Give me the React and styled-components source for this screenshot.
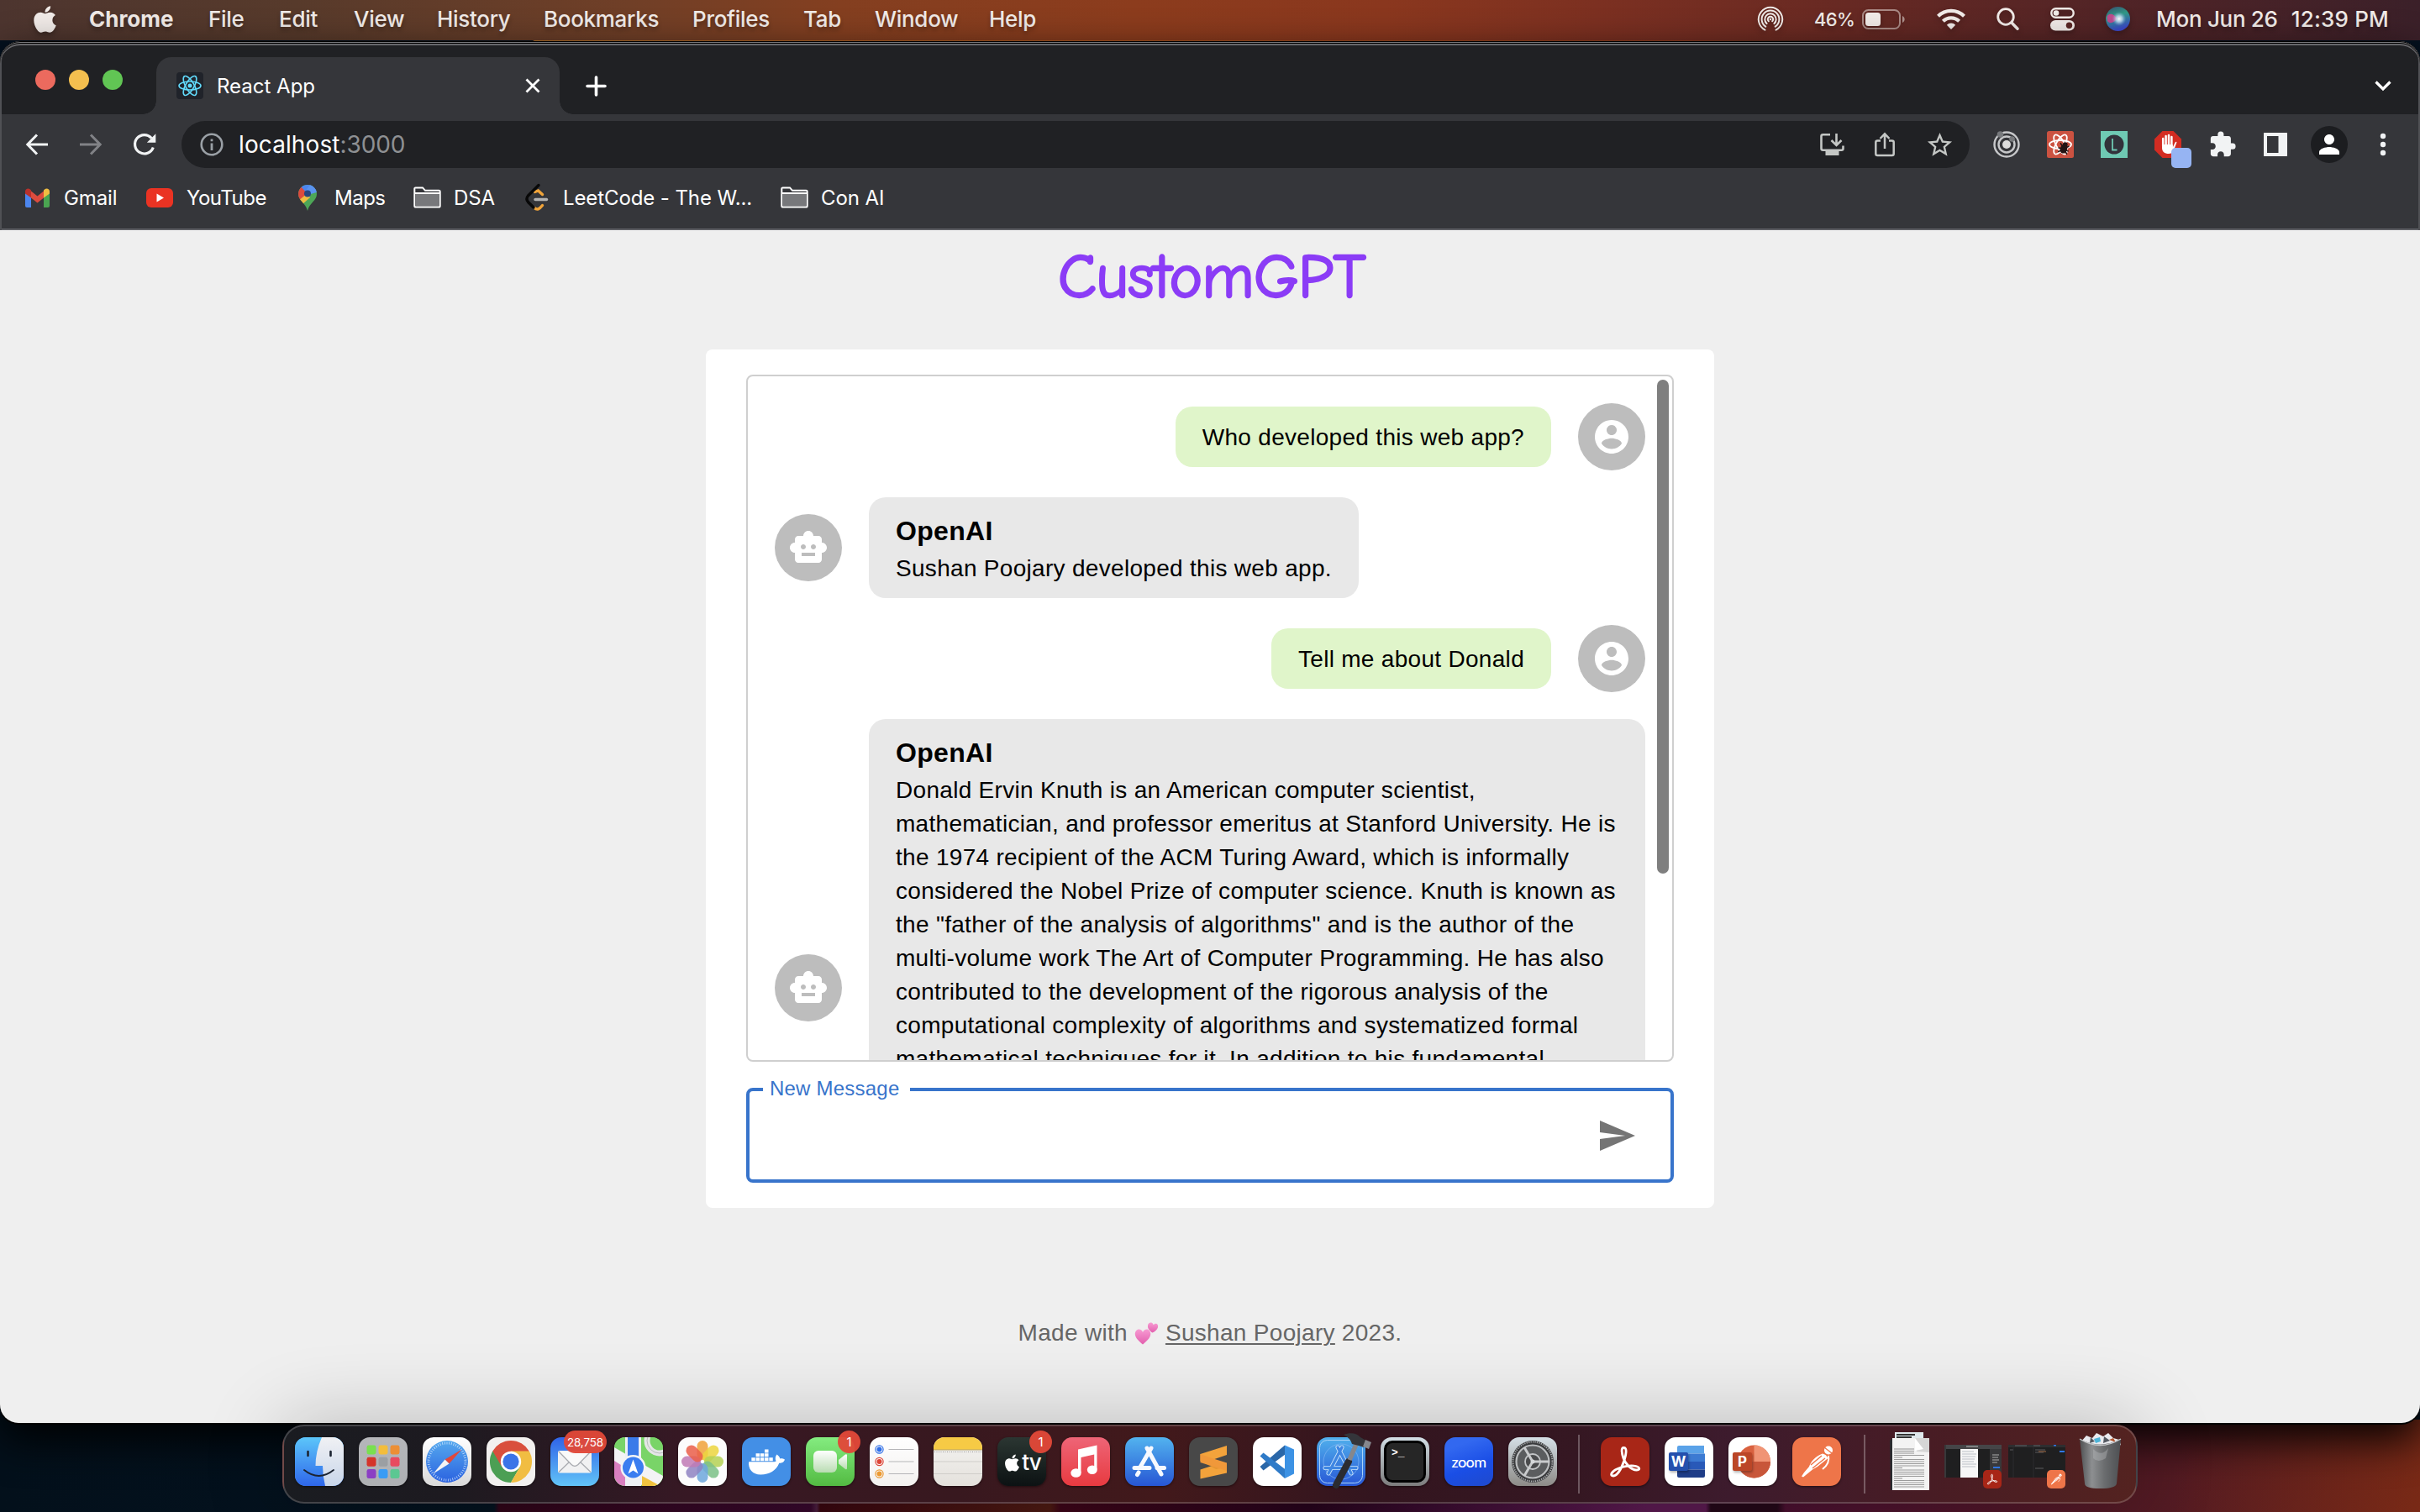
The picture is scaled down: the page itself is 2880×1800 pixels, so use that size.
import React from "react";
import styled, { createGlobalStyle } from "styled-components";
import { FaApple, FaDocker } from "react-icons/fa";
import { MdExtension, MdStarBorder, MdPerson } from "react-icons/md";

const ui = '"SF Pro Text", Inter, "Noto Sans", sans-serif';
const helvetica = '"Liberation Sans", Helvetica, Arial, sans-serif';

const GlobalStyle = createGlobalStyle`
  * { box-sizing: border-box; }
  html, body { margin: 0; padding: 0; }
  body { width: 2880px; height: 1800px; overflow: hidden; background: #000; }
  svg { display: block; flex: none; overflow: visible; }
`;

const Desktop = styled.div`
  width: 2880px;
  height: 1800px;
  display: flex;
  flex-direction: column;
  overflow: hidden;
  font-family: ${ui};
  background:
    linear-gradient(100deg, transparent 2560px, rgba(140, 48, 18, 0.75) 2930px) 0 1690px / 2880px 110px no-repeat,
    linear-gradient(90deg, #03101b 0, #04121f 588px, #2f0518 594px, #36082c 965px, #4b2040 972px, #38060f 976px, #4c1a12 1250px, #3c0518 1262px, #26041c 1560px, #5a1a50 1960px, #5a1a50 2030px, #230818 2036px, #230818 2115px, #4a1030 2125px, #521a24 2540px, #5c1f1c 2880px) 0 1690px / 2880px 110px no-repeat,
    linear-gradient(90deg, #04111f 0, #04111f 634px, #b0702a 636px, #a8551f 1300px, #8a3a1c 2000px, #04111f 2300px);
`;

/* ---------- system menu bar ---------- */
const MenuBar = styled.header`
  height: 48px;
  flex: none;
  display: flex;
  align-items: center;
  justify-content: space-between;
  padding: 0 37px 3px 40px;
  color: #f1ebe8;
  background: linear-gradient(90deg, #4d352f 0, #573a2b 350px, #703f27 750px, #843f20 1000px, #8c3c1d 1350px, #8a371e 1650px, #7c3021 1900px, #672923 2200px, #522426 2500px, #3b2029 2880px);
  text-shadow: 0 4px 5px rgba(0, 0, 0, 0.28);
`;
const MenuGroup = styled.nav`
  display: flex;
  align-items: center;
`;
const AppleMark = styled(FaApple)`
  width: 27px;
  height: 36px;
  margin-right: 39px;
  filter: drop-shadow(0 3px 3px rgba(0, 0, 0, 0.3));
`;
const MenuItem = styled.span`
  width: ${(p) => p.$w}px;
  font-size: 26px;
  font-weight: ${(p) => (p.$bold ? 700 : 500)};
  letter-spacing: ${(p) => (p.$bold ? 0 : -0.3)}px;
  white-space: nowrap;
`;
const Tray = styled.div`
  display: flex;
  align-items: center;
  svg { filter: drop-shadow(0 3px 3px rgba(0, 0, 0, 0.25)); }
`;
const Battery = styled.span`
  display: flex;
  align-items: center;
  gap: 9px;
  margin: 0 38px 0 36px;
  font-size: 22px;
  font-weight: 500;
  letter-spacing: -0.7px;
`;
const TrayIcons = styled.span`
  display: flex;
  align-items: center;
  gap: 37px;
`;
const Clock = styled.span`
  display: flex;
  gap: 16px;
  margin-left: 31px;
  font-size: 26px;
  font-weight: 500;
  letter-spacing: -0.3px;
  white-space: nowrap;
`;
const Time = styled.span`
  letter-spacing: 0.2px;
`;

/* ---------- browser window ---------- */
const BrowserWindow = styled.main`
  position: relative;
  height: 1645px;
  margin-top: 1px;
  flex: none;
  display: flex;
  flex-direction: column;
  border-radius: 24px 24px 22px 22px;
  overflow: hidden;
  background: #35363a;
  box-shadow: 0 2px 0 #000, 0 20px 50px rgba(0, 0, 0, 0.95);
  &::after {
    content: "";
    position: absolute;
    inset: 0 0 auto 0;
    height: 225px;
    border-radius: 24px 24px 0 0;
    pointer-events: none;
    box-shadow: inset 0 1px #000, inset 0 2px #77777a, inset 0 3px #000, inset 0 5px #67676b, inset 2px 0 #505155, inset -2px 0 #505155;
  }
`;
const TabStrip = styled.div`
  height: 87px;
  flex: none;
  display: flex;
  align-items: flex-end;
  padding: 0 34px 0 42px;
  background: #202124;
`;
const Lights = styled.div`
  display: flex;
  gap: 16px;
  margin: 0 40px 29px 0;
`;
const Light = styled.i`
  width: 24px;
  height: 24px;
  border-radius: 50%;
  background: ${(p) => p.$color};
`;
const Tab = styled.div`
  position: relative;
  width: 480px;
  height: 68px;
  display: flex;
  align-items: center;
  padding: 0 23px 0 24px;
  border-radius: 18px 18px 0 0;
  background: #35363a;
  color: #fff;
  font-size: 24px;
  &::before, &::after {
    content: "";
    position: absolute;
    bottom: 0;
    width: 16px;
    height: 16px;
  }
  &::before {
    left: -16px;
    background: radial-gradient(circle at 0 0, transparent 15.5px, #35363a 16px);
  }
  &::after {
    right: -16px;
    background: radial-gradient(circle at 100% 0, transparent 15.5px, #35363a 16px);
  }
`;
const TabIcon = styled.span`
  width: 32px;
  height: 32px;
  display: grid;
  place-items: center;
  margin-right: 16px;
  border-radius: 4px;
  background: #20232a;
`;
const TabTitle = styled.span`
  flex: 1;
`;
const StripButton = styled.span`
  height: 68px;
  display: grid;
  place-items: center;
  margin-left: ${(p) => (p.$end ? "auto" : "31px")};
`;
const Toolbar = styled.div`
  height: 72px;
  flex: none;
  display: flex;
  align-items: center;
  padding: 0 36px 0 30px;
`;
const NavButtons = styled.div`
  display: flex;
  gap: 36px;
  width: 186px;
`;
const Omnibox = styled.div`
  width: 2128px;
  height: 56px;
  display: flex;
  align-items: center;
  padding: 0 18px 0 22px;
  border-radius: 28px;
  background: #202124;
  color: #fff;
  font-size: 28px;
`;
const Address = styled.span`
  flex: 1;
  margin-left: 18px;
  letter-spacing: 0.1px;
`;
const Port = styled.span`
  color: #8e9093;
  letter-spacing: -0.1px;
`;
const OmniIcons = styled.span`
  display: flex;
  align-items: center;
  gap: 36px;
  color: #c4c7c5;
`;
const Extensions = styled.div`
  display: flex;
  align-items: center;
  margin-left: 28px;
  color: #f1f3f4;
`;
const ExtSlot = styled.span`
  position: relative;
  width: ${(p) => p.$w || 64}px;
  height: 32px;
  display: flex;
  align-items: center;
`;
const BlueBadge = styled.i`
  position: absolute;
  left: 20px;
  top: 20px;
  width: 24px;
  height: 24px;
  border-radius: 5px;
  background: #96b4f3;
`;
const ProfileButton = styled.span`
  width: 44px;
  height: 44px;
  margin-right: 38px;
  display: grid;
  place-items: center;
  border-radius: 50%;
  background: #1c1d20;
  color: #fff;
`;
const Bookmarks = styled.div`
  height: 66px;
  flex: none;
  display: flex;
  align-items: center;
  padding: 0 0 10px 29px;
  border-bottom: 2px solid #5f6065;
  color: #fff;
  font-size: 24px;
  letter-spacing: -0.1px;
`;
const Bookmark = styled.span`
  width: ${(p) => p.$w}px;
  display: flex;
  align-items: center;
  white-space: nowrap;
  letter-spacing: ${(p) => (p.$tight ? -0.5 : -0.1)}px;
`;
const BookmarkIcon = styled.span`
  width: ${(p) => p.$w || 48}px;
`;

/* ---------- page ---------- */
const Page = styled.div`
  flex: 1;
  display: flex;
  flex-direction: column;
  align-items: center;
  background: #efefef;
  font-family: ${helvetica};
`;
const Title = styled.h1`
  height: 142px;
  margin: 0;
  padding: 10px 0 0 4px;
  font: 400 75px/92px "Comic Sans MS", "Comic Neue", Lato, cursive;
  font-variant-ligatures: none;
  letter-spacing: -0.6px;
  color: #8b3cf6;
  -webkit-text-stroke: 2.4px #8b3cf6;
`;
const Card = styled.section`
  width: 1200px;
  height: 1022px;
  display: flex;
  flex-direction: column;
  gap: 31px;
  padding: 30px 48px;
  border-radius: 8px;
  background: #fff;
`;
const ChatBox = styled.div`
  position: relative;
  height: 818px;
  flex: none;
  overflow: hidden;
  display: flex;
  flex-direction: column;
  gap: 32px;
  padding: 32px;
  border: 2px solid #cfcfcf;
  border-radius: 8px;
`;
const ScrollThumb = styled.i`
  position: absolute;
  top: 4px;
  right: 4px;
  width: 14px;
  height: 588px;
  border-radius: 7px;
  background: #7f7f7f;
`;
const Message = styled.div`
  flex: none;
  display: flex;
  align-items: center;
  justify-content: ${(p) => (p.$own ? "flex-end" : "flex-start")};
  gap: 32px;
`;
const Avatar = styled.span`
  width: 80px;
  height: 80px;
  flex: none;
  display: grid;
  place-items: center;
  border-radius: 50%;
  background: #bdbdbd;
  color: #fff;
`;
const Bubble = styled.div`
  flex: ${(p) => (p.$minHeight ? "1" : "none")};
  min-height: ${(p) => p.$minHeight || 0}px;
  padding: ${(p) => (p.$own ? 17 : 16)}px 32px 15px;
  border-radius: 20px;
  background: ${(p) => (p.$own ? "#e0f5ca" : "#e8e8e8")};
  color: #000;
`;
const Sender = styled.div`
  height: 49px;
  font: 700 32px/48px ${helvetica};
  letter-spacing: 0.3px;
`;
const Line = styled.div`
  font-size: 28px;
  line-height: 40px;
  letter-spacing: 0.3px;
  white-space: nowrap;
`;
const InputBox = styled.div`
  position: relative;
  height: 113px;
  flex: none;
  display: flex;
  align-items: center;
  justify-content: flex-end;
  padding: 0 40px 0 0;
  border: 4px solid #3874cb;
  border-radius: 8px;
`;
const InputLabel = styled.label`
  position: absolute;
  left: 16px;
  top: -17px;
  width: 175px;
  padding-left: 8px;
  background: #fff;
  color: #3874cb;
  font-size: 24px;
  line-height: 28px;
  letter-spacing: 0.22px;
  white-space: nowrap;
`;
const Footer = styled.footer`
  margin-top: 129px;
  display: flex;
  align-items: center;
  color: #666;
  font-size: 28px;
  line-height: 40px;
  letter-spacing: 0.3px;
  white-space: pre;
`;
const AuthorLink = styled.a`
  text-decoration: underline;
  text-decoration-thickness: 2px;
  text-underline-offset: 3px;
  margin: 0 8px 0 9px;
`;

/* ---------- dock ---------- */
const DockRow = styled.div`
  position: relative;
  display: flex;
  justify-content: center;
  margin-top: 2px;
`;
const Dock = styled.div`
  width: 2208px;
  height: 94px;
  display: flex;
  align-items: flex-start;
  padding: 13px 0 0 13px;
  border: 2px solid rgba(255, 255, 255, 0.18);
  border-radius: 26px;
  background: linear-gradient(90deg, #1a1c21 0, #1d1a20 200px, #371824 480px, #38181f 800px, #42191b 1040px, #33151f 1300px, #351722 1540px, #3d1b2d 1720px, #481c24 1960px, #542320 2208px);
  box-shadow: 0 0 96px rgba(0, 0, 0, 0.24);
`;
const DockItem = styled.div`
  position: relative;
  width: 76px;
  flex: none;
`;
const Tile = styled.div`
  width: 58px;
  height: 58px;
  display: grid;
  place-items: center;
  overflow: ${(p) => (p.$spill ? "visible" : "hidden")};
  border-radius: 13px;
  background: ${(p) => p.$bg};
  box-shadow: 0 1px 3px rgba(0, 0, 0, 0.5);
  color: #fff;
`;
const CountBadge = styled.span`
  position: absolute;
  top: -8px;
  right: ${(p) => (p.$wide ? 9 : 11)}px;
  min-width: 27px;
  height: 27px;
  display: grid;
  place-items: center;
  padding: 0 4px;
  border-radius: 14px;
  background: rgba(225, 72, 56, 0.96);
  color: #fff;
  font-size: ${(p) => (p.$wide ? 13.4 : 15)}px;
  letter-spacing: -0.1px;
`;
const Divider = styled.i`
  width: 2px;
  height: 70px;
  flex: none;
  margin: -3px ${(p) => p.$after}px 0 ${(p) => p.$before}px;
  background: rgba(255, 255, 255, 0.28);
`;
const DocStack = styled.div`
  margin: -6px 18px 0 0;
`;
const MiniWindow = styled.div`
  position: relative;
  width: 68px;
  height: 39px;
  margin: 9px 8px 0 0;
  background: #1f1f20;
`;
const MiniBadge = styled.div`
  position: absolute;
  right: 0;
  top: 30px;
  width: 22px;
  height: 22px;
  display: grid;
  place-items: center;
  border-radius: 5px;
  background: ${(p) => p.$bg};
`;
const Trash = styled.div`
  margin: -6px 0 0 8px;
`;
const WordMark = styled.span`
  font: ${(p) => p.$font};
  letter-spacing: ${(p) => p.$ls || 0}px;
`;
const TvMark = styled.span`
  display: flex;
  align-items: center;
  margin-top: 2px;
  font: 500 26px/24px ${ui};
  letter-spacing: -1px;
`;
const OfficeLetter = styled.span`
  position: absolute;
  left: 5px;
  top: 18px;
  width: 23px;
  height: 22px;
  display: grid;
  place-items: center;
  border-radius: 2px;
  background: ${(p) => p.$bg};
  box-shadow: 1px 2px 3px rgba(0, 0, 0, 0.3);
  color: #fff;
  font: 700 17px/20px ${ui};
`;
const Prompt = styled.span`
  width: 50px;
  height: 50px;
  padding: 5px 0 0 6px;
  border: 3px solid #000;
  border-radius: 10px;
  background: #262626;
  font: 700 13px/14px "Liberation Mono", monospace;
`;

/* ---------- line icons ---------- */
const Airdrop = () => (
  <svg width="32" height="31" viewBox="0 0 32 31" fill="none" stroke="currentColor" strokeWidth="2" strokeLinecap="round">
    <path d="M9.500 28.600A14.200 14.200 0 1 1 22.500 28.600" />
    <path d="M10.300 24.700A10.400 10.400 0 1 1 21.700 24.700" />
    <path d="M11.600 21.100A6.700 6.700 0 1 1 20.400 21.100" />
    <path d="M13.800 18.300A3.200 3.200 0 1 1 18.200 18.300" />
    <circle cx="16" cy="16" r="1.300" fill="currentColor" stroke="none" />
  </svg>
);
const BatteryGlyph = () => (
  <svg width="51" height="24" viewBox="0 0 51 24">
    <rect x="1" y="1" width="44" height="22" rx="6.5" fill="none" stroke="currentColor" strokeOpacity=".5" strokeWidth="2" />
    <rect x="4" y="4" width="18" height="16" rx="3.5" fill="currentColor" />
    <path d="M48 8c3.500 1.500 3.500 6.500 0 8z" fill="currentColor" opacity=".55" />
  </svg>
);
const Wifi = () => (
  <svg width="34" height="25" viewBox="0 0 34 25" fill="none" stroke="currentColor" strokeWidth="4.200">
    <path d="M1.500 9.200a22 22 0 0 1 31 0" />
    <path d="M7.400 15.300a13.600 13.600 0 0 1 19.200 0" />
    <path d="M17 25l-5.200-5.300a7.400 7.400 0 0 1 10.400 0z" fill="currentColor" stroke="none" />
  </svg>
);
const Search = () => (
  <svg width="27" height="27" viewBox="0 0 27 27" fill="none" stroke="currentColor" strokeWidth="2.800" strokeLinecap="round">
    <circle cx="11" cy="11" r="9.300" />
    <path d="M18 18l7 7.200" strokeWidth="3.400" />
  </svg>
);
const Toggles = () => (
  <svg width="29" height="27" viewBox="0 0 29 27">
    <rect x="1.300" y="1.300" width="26.400" height="10.400" rx="5.200" fill="none" stroke="currentColor" strokeWidth="2.400" />
    <circle cx="7" cy="6.500" r="3.300" fill="currentColor" />
    <rect x="0" y="15" width="29" height="12.500" rx="6.250" fill="currentColor" />
    <circle cx="22.500" cy="21.200" r="3.700" fill="#5a2725" />
  </svg>
);
const Siri = () => (
  <svg width="29" height="29" viewBox="0 0 29 29">
    <defs>
      <linearGradient id="siriBase" x1="0" y1="0" x2=".3" y2="1">
        <stop offset="0" stopColor="#3a4a6e" /><stop offset=".45" stopColor="#2f9a86" /><stop offset="1" stopColor="#3b49c8" />
      </linearGradient>
      <radialGradient id="siriGlow" cx=".55" cy=".5" r=".3">
        <stop offset="0" stopColor="#fff" /><stop offset=".45" stopColor="#d7ecff" stopOpacity=".7" /><stop offset="1" stopColor="#8ad" stopOpacity="0" />
      </radialGradient>
    </defs>
    <circle cx="14.500" cy="14.500" r="14.500" fill="url(#siriBase)" />
    <path d="M1.500 12c2-5 8-4 12 2-3 5-9 7-11.500 3z" fill="#d8418e" opacity=".85" />
    <circle cx="14.500" cy="14.500" r="14" fill="url(#siriGlow)" />
  </svg>
);
const ReactMark = ({ size = 28, color = "#61dafb", w = 1.6 }) => (
  <svg width={size} height={size} viewBox="-14 -14 28 28" fill="none" stroke={color} strokeWidth={w}>
    <circle r="2.500" fill={color} stroke="none" />
    <ellipse rx="13" ry="5" />
    <ellipse rx="13" ry="5" transform="rotate(60)" />
    <ellipse rx="13" ry="5" transform="rotate(120)" />
  </svg>
);
const Cross = () => (
  <svg width="18" height="18" viewBox="0 0 18 18" stroke="#fff" strokeWidth="2.800"><path d="M1.500 1.500l15 15M16.500 1.500l-15 15" /></svg>
);
const Plus = () => (
  <svg width="25" height="25" viewBox="0 0 25 25" stroke="#fff" strokeWidth="3.600" strokeLinecap="round"><path d="M12.500 2v21M2 12.500h21" /></svg>
);
const Chevron = () => (
  <svg width="20" height="12" viewBox="0 0 20 12" fill="none" stroke="#fff" strokeWidth="3.200"><path d="M1.500 1.500l8.500 8.500 8.500-8.500" /></svg>
);
const Arrow = ({ flip, color }) => (
  <svg width="28" height="28" viewBox="0 0 28 28" fill="none" stroke={color} strokeWidth="3" strokeLinejoin="miter">
    <g transform={flip ? "translate(28 0) scale(-1 1)" : undefined}><path d="M14 2.500L2.800 14 14 25.500M3.500 14H27" /></g>
  </svg>
);
const Reload = () => (
  <svg width="28" height="28" viewBox="0 0 28 28">
    <path d="M24.300 17.500A11.200 11.200 0 1 1 22.300 6.500" fill="none" stroke="#f1f3f4" strokeWidth="3.200" />
    <path d="M27.300 1.200v10.500H16.800z" fill="#f1f3f4" />
  </svg>
);
const Info = () => (
  <svg width="28" height="28" viewBox="0 0 28 28">
    <circle cx="14" cy="14" r="12.300" fill="none" stroke="#9aa0a6" strokeWidth="2.600" />
    <path d="M12.600 12.600h2.800V21h-2.800zM12.600 7.500h2.800v2.800h-2.800z" fill="#9aa0a6" />
  </svg>
);
const Install = () => (
  <svg width="29" height="28" viewBox="0 0 29 28" fill="none" stroke="currentColor" strokeWidth="2.600">
    <path d="M12 2.300H3.500a2 2 0 0 0-2 2v14.500a2 2 0 0 0 2 2H25.500a2 2 0 0 0 2-2V15.500" />
    <path d="M19.500 1v13M13.500 9l6 6 6-6" />
    <path d="M6.500 22h16v5h-16z" fill="currentColor" stroke="none" />
  </svg>
);
const Share = () => (
  <svg width="24" height="30" viewBox="0 0 24 30" fill="none" stroke="currentColor" strokeWidth="2.500">
    <path d="M7 10.500H3.300a2 2 0 0 0-2 2V26a2 2 0 0 0 2 2h17.400a2 2 0 0 0 2-2V12.500a2 2 0 0 0-2-2H17" />
    <path d="M12 20V2.500M6.500 8L12 2.300 17.500 8" />
  </svg>
);
const Target = () => (
  <svg width="32" height="32" viewBox="0 0 32 32" fill="none" stroke="#c7c8ca" strokeWidth="2.400">
    <circle cx="16" cy="16" r="14.500" /><circle cx="16" cy="16" r="9.500" />
    <circle cx="16" cy="16" r="5" fill="#dcdcdc" stroke="none" />
    <circle cx="8.500" cy="4" r="3.800" fill="#77797c" stroke="none" /><circle cx="22.500" cy="9.500" r="3.300" fill="#77797c" stroke="none" />
  </svg>
);
const ReactDev = () => (
  <svg width="32" height="32" viewBox="0 0 32 32">
    <rect width="32" height="32" rx="2.500" fill="#cb5241" />
    <g transform="translate(16 16)" fill="none" stroke="#fff" strokeWidth="1.800"><ellipse rx="13" ry="5" /><ellipse rx="13" ry="5" transform="rotate(60)" /><ellipse rx="13" ry="5" transform="rotate(120)" /></g>
    <g transform="translate(20 21) rotate(20)" fill="#231413" stroke="#231413" strokeWidth="1.500"><ellipse rx="3.300" ry="5" /><circle cy="-5" r="2.200" /><path d="M-6-5L6 5M-6.500 1H6.500M-5 6L5-5" /></g>
  </svg>
);
const LExt = () => (
  <svg width="32" height="32" viewBox="0 0 32 32">
    <rect width="32" height="32" fill="#6fc9b3" /><circle cx="16" cy="16" r="11.500" fill="#32323a" />
    <path d="M14 9v13.500h5.500" fill="none" stroke="#6fc9b3" strokeWidth="1.800" />
  </svg>
);
const StopHand = () => (
  <svg width="32" height="32" viewBox="0 0 32 32">
    <path d="M9.500 0h13L32 9.500v13L22.500 32h-13L0 22.500v-13z" fill="#d32c22" />
    <path d="M10.200 9v9M13.600 6v11M17 5v12M20.400 7v11" stroke="#fff" strokeWidth="2.500" strokeLinecap="round" />
    <path d="M9 16h12.600l.4 3 2.600-5.500c1-1.300 2.200-.6 1.700.6L22.500 24c-1 2-3 3-5.500 3-5 0-8-2.500-8-7z" fill="#fff" />
  </svg>
);
const SidePanel = () => (
  <svg width="28" height="28" viewBox="0 0 28 28"><path d="M0 0h28v28H0zM4 4v20h13.500V4z" fill="#f1f3f4" fillRule="evenodd" /></svg>
);
const Dots = () => (
  <svg width="8" height="28" viewBox="0 0 8 28" fill="#f1f3f4"><circle cx="4" cy="4" r="3.200" /><circle cx="4" cy="14" r="3.200" /><circle cx="4" cy="24" r="3.200" /></svg>
);
const Gmail = () => (
  <svg width="31" height="23" viewBox="0 0 31 23">
    <path d="M1 4v17a2 2 0 0 0 2 2h5V9z" fill="#4c86ee" /><path d="M30 4v17a2 2 0 0 1-2 2h-5V9z" fill="#4aa551" />
    <path d="M8 3.500l7.500 6 7.500-6v8L15.500 17.500 8 11.500z" fill="#dc4b3e" />
    <path d="M1 4C1 .8 4.500-.6 7 1.500l1 1v9L1 6.500z" fill="#b9312b" /><path d="M30 4c0-3.200-3.500-4.600-6-2.500l-1 1v9l7-5z" fill="#f0bd42" />
  </svg>
);
const YouTube = () => (
  <svg width="32" height="23" viewBox="0 0 32 23"><rect width="32" height="23" rx="6" fill="#ea3323" /><path d="M12.500 6.500v10l8.500-5z" fill="#fff" /></svg>
);
const MapsPin = () => (
  <svg width="22" height="31" viewBox="0 0 22 31">
    <clipPath id="pinShape"><path d="M11 0a11 11 0 0 0-11 11c0 8 8.500 10 11 20 2.500-10 11-12 11-20A11 11 0 0 0 11 0z" /></clipPath>
    <g clipPath="url(#pinShape)">
      <rect width="22" height="31" fill="#4da657" /><path d="M0 0h22v7L11 11 2 4z" fill="#4c86ee" /><path d="M0 0l3 2 8 9-11 9z" fill="#dc4b3e" />
      <path d="M0 19l11-9 3 5-10 9z" fill="#f0bd42" /><path d="M14 0h8v9l-11 3-3-4z" fill="#5a93ef" />
    </g>
    <circle cx="11" cy="10.500" r="4" fill="#28467f" />
  </svg>
);
const Folder = () => (
  <svg width="33" height="26" viewBox="0 0 33 26">
    <path d="M1.300 23V2.600c0-.7.500-1.200 1.200-1.200H11l3 3.400h16.300c.8 0 1.400.6 1.400 1.300V23c0 .9-.6 1.600-1.500 1.600H2.800c-.9 0-1.500-.7-1.500-1.600z" fill="#35363a" stroke="#fff" strokeWidth="2" />
    <path d="M2.500 9h28v14h-28z" fill="#77787b" /><path d="M1.500 8h30" stroke="#fff" strokeWidth="2" />
  </svg>
);
const LeetCode = () => (
  <svg width="28" height="32" viewBox="0 0 28 32" fill="none" strokeLinecap="round" strokeWidth="3.400">
    <path d="M11.500 9.500l4-1.500 5 4.500M11 28.500c3 3 6 1.500 9.500-3" stroke="#f0a43a" />
    <path d="M16 1.500L3.500 14c-2 2.300-2 5 0 7.500L10 28" stroke="#080808" />
    <path d="M12 18.500h13.500" stroke="#b3b3b3" />
  </svg>
);
const BotIcon = () => (
  <svg width="48" height="48" viewBox="0 0 24 24" fill="currentColor"><path d="M20 9V7c0-1.100-.9-2-2-2h-3c0-1.660-1.340-3-3-3S9 3.340 9 5H6c-1.100 0-2 .9-2 2v2c-1.660 0-3 1.340-3 3s1.340 3 3 3v4c0 1.100.9 2 2 2h12c1.100 0 2-.9 2-2v-4c1.660 0 3-1.340 3-3s-1.340-3-3-3zM7.500 11.500c0-.83.67-1.500 1.500-1.500s1.500.67 1.500 1.500S9.830 13 9 13s-1.500-.67-1.500-1.500zM16 17H8v-2h8v2zm-1-4c-.83 0-1.500-.67-1.500-1.500S14.170 10 15 10s1.500.67 1.500 1.500S15.830 13 15 13z" /></svg>
);
const UserIcon = () => (
  <svg width="48" height="48" viewBox="0 0 24 24" fill="currentColor"><path d="M12 2C6.480 2 2 6.480 2 12s4.480 10 10 10 10-4.480 10-10S17.520 2 12 2zm0 3c1.660 0 3 1.340 3 3s-1.340 3-3 3-3-1.340-3-3 1.340-3 3-3zm0 14.200c-2.500 0-4.710-1.280-6-3.220.03-1.990 4-3.080 6-3.080 1.990 0 5.970 1.090 6 3.080-1.290 1.940-3.500 3.220-6 3.220z" /></svg>
);
const SendIcon = () => (
  <svg width="48" height="48" viewBox="0 0 24 24" fill="#757575"><path d="M2.010 21L23 12 2.010 3 2 10l15 2-15 2z" /></svg>
);
const Hearts = () => (
  <svg width="28" height="27" viewBox="0 0 28 27">
    <defs><linearGradient id="pink" x1="0" y1="0" x2="0" y2="1"><stop offset="0" stopColor="#f79ad2" /><stop offset="1" stopColor="#e25fae" /></linearGradient></defs>
    <path d="M10 26.500C6 23 .8 19 .8 14c0-3 2-5.500 4.600-5.500 2.200 0 3.900 1.500 4.600 3.500.9-2 2.700-3.500 4.700-3.500 2.700 0 4.600 2.500 4.600 5.500 0 5-5.300 9-9.300 12.500z" fill="url(#pink)" />
    <path d="M22 12.500c-3-1.700-6.400-4.500-6.200-8C15.900 2 17.600.5 19.500.7c1.500.1 2.500 1.200 2.900 2.500C23.200 2 24.400 1.200 25.700 1.500c1.800.4 2.600 2.200 2.200 4.200-.6 3-3.300 5.200-5.900 6.800z" fill="url(#pink)" transform="rotate(4 21 7)" />
  </svg>
);

/* ---------- dock artwork ---------- */
const Finder = () => (
  <svg width="58" height="58" viewBox="0 0 58 58">
    <defs>
      <linearGradient id="fbl" x1="0" y1="0" x2="0" y2="1"><stop offset="0" stopColor="#5cc6fa" /><stop offset="1" stopColor="#2e66ea" /></linearGradient>
      <linearGradient id="fwh" x1="0" y1="0" x2="0" y2="1"><stop offset="0" stopColor="#f0f1f4" /><stop offset="1" stopColor="#c9d6ea" /></linearGradient>
    </defs>
    <rect width="58" height="58" fill="url(#fbl)" />
    <path d="M32 0Q24.500 17 24.500 34H33Q33 46 36 58H58V0z" fill="url(#fwh)" />
    <path d="M15.500 17v5M42.500 17v5" stroke="#1c2431" strokeWidth="2.600" strokeLinecap="round" />
    <path d="M11 39q17.500 14 35 0" fill="none" stroke="#1c2431" strokeWidth="1.900" strokeLinecap="round" />
  </svg>
);
const padColors = ["#79e04f", "#f3bd3c", "#ec8f35", "#d5342a", "#9b9fa3", "#e84a60", "#8b3fc4", "#3a9cf5", "#5cc792"];
const Launchpad = () => (
  <svg width="58" height="58" viewBox="0 0 58 58">
    {padColors.map((c, i) => <rect key={c} x={9.500 + (i % 3) * 14} y={9.500 + Math.floor(i / 3) * 14.300} width="11" height="11" rx="2.400" fill={c} />)}
  </svg>
);
const Safari = () => (
  <svg width="58" height="58" viewBox="0 0 58 58">
    <defs><linearGradient id="saf" x1="0" y1="0" x2="0" y2="1"><stop offset="0" stopColor="#55a9ee" /><stop offset="1" stopColor="#2b62e0" /></linearGradient></defs>
    <circle cx="29" cy="29" r="25" fill="url(#saf)" />
    <circle cx="29" cy="29" r="22" fill="none" stroke="#d9ecff" strokeWidth="3" strokeDasharray=".8 1.900" opacity=".85" />
    <path d="M46.500 14.500L31.500 31.500 26.500 26.500z" fill="#e0483c" /><path d="M12.500 43.500L26.500 26.500 31.500 31.500z" fill="#f4f4f4" />
  </svg>
);
const Chrome = () => (
  <svg width="58" height="58" viewBox="0 0 58 58">
    <path d="M29 29L7.300 16.500A25 25 0 0 1 50.700 16.500z" fill="#d94f3d" /><path d="M7.300 16.500a25 25 0 0 0 21.700 37.500L40 35 29 29z" fill="#4c9f54" />
    <path d="M50.700 16.500H29V29l10.800 6.200L29 54a25 25 0 0 0 21.700-37.500z" fill="#f1bd42" />
    <path d="M50.700 16.500H29l-10.800 18.700L7.300 16.500z" fill="#d94f3d" />
    <circle cx="29" cy="29" r="12.200" fill="#fff" /><circle cx="29" cy="29" r="9.600" fill="#3b74e8" />
  </svg>
);
const Mail = () => (
  <svg width="58" height="58" viewBox="0 0 58 58">
    <rect x="9" y="16" width="40" height="26.500" rx="2" fill="#f1f1f2" /><path d="M10 41.500L24 28M48 41.500L34 28" stroke="#a9abb0" strokeWidth="1.300" />
    <path d="M10 17l15 15.500c2.500 2.400 5.500 2.400 8 0L48 17" fill="#fafafa" stroke="#a9abb0" strokeWidth="1.300" />
  </svg>
);
const Maps = () => (
  <svg width="58" height="58" viewBox="0 0 58 58">
    <rect width="58" height="58" fill="#79d468" /><path d="M0 12l58 34v12H34L0 30z" fill="#f3f3f5" /><path d="M0 28l16 10v20H0z" fill="#d97fc0" />
    <path d="M33 46l22 12H33z" fill="#f0c23f" /><circle cx="54" cy="4" r="15" fill="none" stroke="#e4e6e6" strokeWidth="7" /><circle cx="54" cy="4" r="15" fill="none" stroke="#b9bdbd" strokeWidth="1" />
    <path d="M13 0h19v58H13z" fill="#eef0f4" /><path d="M16 0h13v30H16z" fill="#3b7be9" />
    <circle cx="22.500" cy="36" r="15" fill="#f2f3f5" /><circle cx="22.500" cy="36" r="12.500" fill="#3a7df0" /><path d="M22.500 26.500l6 17-6-4-6 4z" fill="#fff" />
  </svg>
);
const petals = ["#f0a23b", "#ecd53f", "#b5d255", "#7cc087", "#6fa8dc", "#8f83c2", "#c07ab5", "#ea5f4b"];
const Photos = () => (
  <svg width="58" height="58" viewBox="0 0 58 58">
    {petals.map((c, i) => <rect key={c} x="22.500" y="4" width="13" height="23" rx="6.500" fill={c} opacity=".86" transform={`rotate(${i * 45} 29 29)`} />)}
  </svg>
);
const FaceTime = () => (
  <svg width="58" height="58" viewBox="0 0 58 58">
    <defs><linearGradient id="cam" x1="0" y1="0" x2="0" y2="1"><stop offset="0" stopColor="#fff" /><stop offset="1" stopColor="#b9dcb2" /></linearGradient></defs>
    <rect x="9" y="16" width="28" height="26" rx="6" fill="url(#cam)" /><path d="M39 27l8-6.500q2-1 2 1V37q0 2-2 1l-8-6.500z" fill="url(#cam)" />
  </svg>
);
const Reminders = () => (
  <svg width="58" height="58" viewBox="0 0 58 58">
    {["#2f6fe8", "#dd4437", "#ec9a32"].map((c, i) => (
      <g key={c} transform={`translate(11.500 ${14.500 + i * 14.500})`}><circle r="4.600" fill="none" stroke={c} strokeWidth="1.200" /><circle r="3" fill={c} /><path d="M11 0H41" stroke="#b5b5b8" strokeWidth="1.200" /></g>
    ))}
  </svg>
);
const Notes = () => (
  <svg width="58" height="58" viewBox="0 0 58 58">
    <rect width="58" height="15" fill="#f6ca45" /><path d="M0 15h58" stroke="#b8a468" strokeWidth="1" /><path d="M1 17.500h56" stroke="#999" strokeWidth="1" strokeDasharray="1 1.500" />
    <path d="M0 29h58M0 43.500h58" stroke="#cfcdc9" strokeWidth="1" />
  </svg>
);
const Music = () => (
  <svg width="58" height="58" viewBox="0 0 58 58" fill="#fff">
    <path d="M20 14.500L42.500 9.500V38h-3.300V20.500L23.500 24v18h-3.500z" />
    <ellipse cx="17.500" cy="42.500" rx="6.200" ry="5.300" /><ellipse cx="36.800" cy="38.800" rx="6" ry="5.200" />
  </svg>
);
const AppStore = () => (
  <svg width="58" height="58" viewBox="0 0 58 58" stroke="#f6f9ff" strokeWidth="5" strokeLinecap="round">
    <path d="M31 13L18 35.500M16 42l-1.500 2.500M26 13l17 31" /><path d="M11 36.500h18M38 36.500h8.500" />
  </svg>
);
const Sublime = () => (
  <svg width="58" height="58" viewBox="0 0 58 58">
    <path d="M13.500 20L45 10v11L26 27.500 45 31.500v11L13.500 49.500V38.500L32 32.500 13.500 28z" fill="#f3a33b" />
    <path d="M13.500 28l31.500 3.500v4L32 38z" fill="#d98a2c" opacity=".55" />
    <path d="M13.500 20v10L45 40V30.500L26 24.500z" fill="#f0983a" />
  </svg>
);
const VSCode = () => (
  <svg width="58" height="58" viewBox="0 0 58 58">
    <path d="M38 9.500L8.500 35l4 4.500L39 20z" fill="#2a67a8" /><path d="M38 49L8.500 22.500l4-4L39 38.500z" fill="#2f7bc8" /><path d="M38 9.500l11 5v29l-11 5.500z" fill="#3c92e4" />
  </svg>
);
const Xcode = () => (
  <svg width="58" height="58" viewBox="0 0 58 58" fill="none">
    <rect x="3.500" y="3.500" width="51" height="51" rx="9" stroke="#a8d3f8" strokeWidth="1" /><circle cx="29" cy="29" r="21" stroke="#7fb5f2" strokeWidth=".7" />
    <g stroke="#cfe6fb" strokeLinecap="round" strokeWidth="5"><path d="M30 12L14 43M25 12l16 31M10 36.500h37" /></g>
    <g stroke="#3f86e2" strokeLinecap="round" strokeWidth="3.400"><path d="M30 12L14 43M25 12l16 31M10 36.500h37" /></g>
    <path d="M38 29L23 57" stroke="#2b2c31" strokeWidth="8" strokeLinecap="round" /><path d="M48 6L39 27" stroke="#85878d" strokeWidth="5.500" />
    <path d="M32-3c8-3 16-2 20 3l7 4-3 8-6-2-8-2q-2-7-10-11z" fill="#34353a" /><path d="M58 3l7 3-3 8-7-3z" fill="#85878d" />
  </svg>
);
const Gear = () => (
  <svg width="58" height="58" viewBox="0 0 58 58" fill="none">
    <circle cx="29" cy="29" r="25" fill="#3a3b3d" /><circle cx="29" cy="29" r="23.500" stroke="#a9abad" strokeWidth="2" strokeDasharray="1.300 1.200" />
    <circle cx="29" cy="29" r="19.500" fill="#5b5d5f" stroke="#bcbec0" strokeWidth="2.200" /><circle cx="29" cy="29" r="9" fill="#4a4b4d" stroke="#c3c5c7" strokeWidth="1.800" />
    <path d="M29 29H49M29 29L19 12M29 29L19 46" stroke="#c9cbcd" strokeWidth="3" /><circle cx="29" cy="29" r="2.500" fill="#d5d7d9" />
  </svg>
);
const Acrobat = ({ size = 58 }) => (
  <svg width={size} height={size} viewBox="0 0 58 58" fill="none" stroke="#fff" strokeWidth="2.800" strokeLinejoin="round">
    <path d="M27 12.500c5-1 3 9 1 15-3 9-8 18-13 18.500-4.500 0-2.500-5 4-8 7-3.500 17-5 23-3.500 5 1.400 5 4.500.5 4.500-6 0-13-7-15.500-14-2-6-3-12 0-12.500z" />
  </svg>
);
const Word = () => (
  <svg width="58" height="58" viewBox="0 0 58 58"><path d="M17 10h30v9.500H15V12q0-2 2-2z" fill="#5aa2e8" /><path d="M15 19.500h33V29H15z" fill="#3c7ad2" /><path d="M15 29h33v9.500H15z" fill="#2959b8" /><path d="M15 38.500h33V46q0 2-2 2H17q-2 0-2-2z" fill="#1f3d88" /></svg>
);
const PowerPoint = () => (
  <svg width="58" height="58" viewBox="0 0 58 58"><circle cx="30.500" cy="29" r="19.500" fill="#d9613f" /><path d="M30.500 9.500A19.500 19.500 0 0 1 50 29H30.500z" fill="#f09475" /><path d="M11 29h39a19.500 19.500 0 0 1-39 0z" fill="#c8563a" /></svg>
);
const Postman = ({ size = 58 }) => (
  <svg width={size} height={size} viewBox="0 0 58 58" fill="#fff">
    <circle cx="43" cy="15.500" r="5" /><path d="M36 19.500c3 .5 5 2.500 6.500 5.500L30 35l-6 3.500-11 9-2-1 3-4.500 6-7c2-6 8-13 16-15.500z" />
    <path d="M22 33l13-11M24 37l15-12" stroke="#ee7549" strokeWidth="1.500" /><path d="M43 22q2 9-7 16" fill="none" stroke="#fff" strokeWidth="2" /><path d="M38 12l9 7" stroke="#ee7549" strokeWidth="1.300" />
  </svg>
);
const lineRows = Array.from({ length: 19 }, (_, i) => 20 + i * 2.500);
const Documents = () => (
  <svg width="47" height="69" viewBox="0 0 47 69">
    <rect x="6" y="0" width="34" height="12" fill="#dfe8ec" /><path d="M8 3h22M8 6h18" stroke="#333" strokeWidth="2" /><path d="M8 8h14v4H8z" fill="#5a7f45" /><path d="M22 7h17v5H22z" fill="#86b4d6" />
    <path d="M0 10l3-3v62H1z" fill="#2a2c30" /><path d="M3 7h31l13 13v49H3z" fill="#f3f3f3" />
    {lineRows.map((y, i) => <path key={y} d={`M5 ${y}H${i % 5 === 4 ? 15 : y < 26 ? 29 : 41}`} stroke="#9b9b9b" strokeWidth="1.100" />)}
    <path d="M30 7h17v17l-15-1z" fill="#d6d6d6" /><path d="M30 7v15l10-2z" fill="#fff" />
  </svg>
);
const EditorShot = () => (
  <svg width="68" height="39" viewBox="0 0 68 39">
    <path d="M0 0h68v5H0z" fill="#454547" /><path d="M0 0h2v39H0zM54 5h14v34H54z" fill="#38383a" /><path d="M19 5h21v34H19z" fill="#f7f7f7" />
    <path d="M26 2h14" stroke="#ddd" strokeWidth=".8" />
    {[8, 11, 14, 17, 20, 23, 26].map((y) => <path key={y} d={`M21 ${y}h${14 + (y % 4)}`} stroke={y % 3 ? "#b3b8bf" : "#73a8e0"} strokeWidth=".9" />)}
    <path d="M57 12h8M57 15h7M57 18h8M57 21h6" stroke="#bbb" strokeWidth=".9" /><path d="M58 26h8v2h-8z" fill="#2f74e0" />
  </svg>
);
const ApiShot = () => (
  <svg width="68" height="39" viewBox="0 0 68 39">
    <path d="M0 0h68v3H0z" fill="#2e2e30" /><path d="M8 1h14M30 1h8M2 6h4M32 6h12M32 9h10M32 28h10" stroke="#77777c" strokeWidth=".7" /><path d="M30 3v36M6 3v36" stroke="#323236" strokeWidth=".7" />
    <path d="M61 7h6v2h-6zM54 0h3v1.500h-3z" fill="#3177e8" /><path d="M36 8h9" stroke="#c47d4e" strokeWidth=".8" />
  </svg>
);
const TrashCan = () => (
  <svg width="51" height="67" viewBox="0 0 51 67">
    <defs><linearGradient id="can" x1="0" y1="0" x2="1" y2="0"><stop offset="0" stopColor="#4e5052" /><stop offset=".3" stopColor="#8d8f91" /><stop offset=".6" stopColor="#6b6d6f" /><stop offset="1" stopColor="#4d4f52" /></linearGradient></defs>
    <path d="M2 12L9 4l7 3 5-6 8 4 6-4 6 6 7 2 2 6-8 4H12z" fill="#e9eaee" /><path d="M14 6l5 5-6 2zM30 5l7 5-8 3z" fill="#555a62" /><path d="M18 8l7-2 1 5-6 2z" fill="#4db4d8" /><path d="M36 9l5-2 3 5z" fill="#b5562e" />
    <path d="M1 8q24 13 49 0L45 61q-1 6-19.500 6T7 61z" fill="url(#can)" /><path d="M1 8q24 15 49 0" fill="none" stroke="#c4c6c8" strokeWidth="1.400" />
    <path d="M17 20q10 10 18-1l-3 12q-9 6-15 0z" fill="#b9bbbd" opacity=".4" />
  </svg>
);

const menus = [["Chrome", 142, true], ["File", 84], ["Edit", 89], ["View", 99], ["History", 127], ["Bookmarks", 177], ["Profiles", 132], ["Tab", 85], ["Window", 136], ["Help", 60]];

const reply = [
  "Donald Ervin Knuth is an American computer scientist,",
  "mathematician, and professor emeritus at Stanford University. He is",
  "the 1974 recipient of the ACM Turing Award, which is informally",
  "considered the Nobel Prize of computer science. Knuth is known as",
  "the \"father of the analysis of algorithms\" and is the author of the",
  "multi-volume work The Art of Computer Programming. He has also",
  "contributed to the development of the rigorous analysis of the",
  "computational complexity of algorithms and systematized formal",
  "mathematical techniques for it. In addition to his fundamental",
];

const dockApps = [
  { bg: "#4a9af0", art: <Finder /> },
  { bg: "linear-gradient(#b5b6ba, #aeb0b3)", art: <Launchpad /> },
  { bg: "linear-gradient(#fff, #d9d9d9)", art: <Safari /> },
  { bg: "#f2f0ef", art: <Chrome /> },
  { bg: "linear-gradient(#2f63e8, #62c4f8)", art: <Mail />, badge: "28,758" },
  { bg: "#79d468", art: <Maps /> },
  { bg: "#fcfcfc", art: <Photos /> },
  { bg: "#438fe6", art: <FaDocker size={43} /> },
  { bg: "linear-gradient(#84ec80, #53bb42)", art: <FaceTime />, badge: "1" },
  { bg: "linear-gradient(#fff, #f3f1ef)", art: <Reminders /> },
  { bg: "linear-gradient(#f4f3f1, #e4e1dc)", art: <Notes /> },
  { bg: "linear-gradient(#2b3632, #0c1213)", art: <TvMark><FaApple size={23} />tv</TvMark>, badge: "1" },
  { bg: "linear-gradient(#ee6577, #e83a40)", art: <Music /> },
  { bg: "linear-gradient(#52b3ef, #2756d4)", art: <AppStore /> },
  { bg: "#484848", art: <Sublime /> },
  { bg: "#fff", art: <VSCode /> },
  { bg: "linear-gradient(#50b0ec, #2857d6)", art: <Xcode />, spill: true },
  { bg: "linear-gradient(#d3dfe6, #7c7c7c)", art: <Prompt>&gt;_</Prompt> },
  { bg: "linear-gradient(160deg, #3268f0 20%, #1a4ee6 60%, #1f49cc)", art: <WordMark $font={'500 18px/24px Lato, Inter, sans-serif'} $ls={-0.6}>zoom</WordMark> },
  { bg: "linear-gradient(#d5dfe6, #8d8b87)", art: <Gear /> },
];
const officeApps = [
  { bg: "#a82617", art: <Acrobat /> },
  { bg: "#fff", art: <Word />, letter: "W", letterBg: "#2450ad" },
  { bg: "#fff", art: <PowerPoint />, letter: "P", letterBg: "#bb4627" },
  { bg: "#ee7549", art: <Postman /> },
];

const DockApp = ({ app }) => (
  <DockItem>
    <Tile $bg={app.bg} $spill={app.spill}>{app.art}</Tile>
    {app.letter && <OfficeLetter $bg={app.letterBg}>{app.letter}</OfficeLetter>}
    {app.badge && <CountBadge $wide={app.badge.length > 1}>{app.badge}</CountBadge>}
  </DockItem>
);

const UserMessage = ({ children }) => (
  <Message $own>
    <Bubble $own><Line>{children}</Line></Bubble>
    <Avatar><UserIcon /></Avatar>
  </Message>
);
const BotMessage = ({ lines, minHeight }) => (
  <Message>
    <Avatar><BotIcon /></Avatar>
    <Bubble $minHeight={minHeight}>
      <Sender>OpenAI</Sender>
      {lines.map((l) => <Line key={l}>{l}</Line>)}
    </Bubble>
  </Message>
);

export default function App() {
  return (
    <Desktop>
      <GlobalStyle />
      <MenuBar>
        <MenuGroup>
          <AppleMark />
          {menus.map(([name, w, bold]) => <MenuItem key={name} $w={w} $bold={bold}>{name}</MenuItem>)}
        </MenuGroup>
        <Tray>
          <Airdrop />
          <Battery>46%<BatteryGlyph /></Battery>
          <TrayIcons><Wifi /><Search /><Toggles /><Siri /></TrayIcons>
          <Clock><span>Mon Jun 26</span><Time>12:39 PM</Time></Clock>
        </Tray>
      </MenuBar>

      <BrowserWindow>
        <TabStrip>
          <Lights><Light $color="#ec6a5e" /><Light $color="#f4bf4f" /><Light $color="#61c554" /></Lights>
          <Tab>
            <TabIcon><ReactMark /></TabIcon>
            <TabTitle>React App</TabTitle>
            <Cross />
          </Tab>
          <StripButton><Plus /></StripButton>
          <StripButton $end><Chevron /></StripButton>
        </TabStrip>
        <Toolbar>
          <NavButtons><Arrow color="#f1f3f4" /><Arrow flip color="#818286" /><Reload /></NavButtons>
          <Omnibox>
            <Info />
            <Address>localhost<Port>:3000</Port></Address>
            <OmniIcons><Install /><Share /><MdStarBorder size={35} /></OmniIcons>
          </Omnibox>
          <Extensions>
            <ExtSlot><Target /></ExtSlot>
            <ExtSlot><ReactDev /></ExtSlot>
            <ExtSlot><LExt /></ExtSlot>
            <ExtSlot><StopHand /><BlueBadge /></ExtSlot>
            <ExtSlot $w={66}><MdExtension size={34} /></ExtSlot>
            <ExtSlot $w={56}><SidePanel /></ExtSlot>
            <ProfileButton><MdPerson size={36} /></ProfileButton>
            <Dots />
          </Extensions>
        </Toolbar>
        <Bookmarks>
          <Bookmark $w={145}><BookmarkIcon $w={47}><Gmail /></BookmarkIcon>Gmail</Bookmark>
          <Bookmark $w={181} $tight><BookmarkIcon><YouTube /></BookmarkIcon>YouTube</Bookmark>
          <Bookmark $w={137} $tight><BookmarkIcon $w={43}><MapsPin /></BookmarkIcon>Maps</Bookmark>
          <Bookmark $w={133}><BookmarkIcon><Folder /></BookmarkIcon>DSA</Bookmark>
          <Bookmark $w={304}><BookmarkIcon $w={45}><LeetCode /></BookmarkIcon>LeetCode - The W...</Bookmark>
          <Bookmark $w={140}><BookmarkIcon>{<Folder />}</BookmarkIcon>Con AI</Bookmark>
        </Bookmarks>

        <Page>
          <Title>CustomGPT</Title>
          <Card>
            <ChatBox>
              <UserMessage>Who developed this web app?</UserMessage>
              <BotMessage lines={["Sushan Poojary developed this web app."]} />
              <UserMessage>Tell me about Donald</UserMessage>
              <BotMessage lines={reply} minHeight={640} />
              <ScrollThumb />
            </ChatBox>
            <InputBox>
              <InputLabel>New Message</InputLabel>
              <SendIcon />
            </InputBox>
          </Card>
          <Footer>Made with <Hearts /><AuthorLink>Sushan Poojary</AuthorLink>2023.</Footer>
        </Page>
      </BrowserWindow>

      <DockRow>
        <Dock>
          {dockApps.map((app, i) => <DockApp key={i} app={app} />)}
          <Divider $before={7} $after={25} />
          {officeApps.map((app, i) => <DockApp key={i} app={app} />)}
          <Divider $before={9} $after={29} />
          <DocStack><Documents /></DocStack>
          <MiniWindow><EditorShot /><MiniBadge $bg="#a82617"><Acrobat size={20} /></MiniBadge></MiniWindow>
          <MiniWindow><ApiShot /><MiniBadge $bg="#ee7549"><Postman size={20} /></MiniBadge></MiniWindow>
          <Trash><TrashCan /></Trash>
        </Dock>
      </DockRow>
    </Desktop>
  );
}
